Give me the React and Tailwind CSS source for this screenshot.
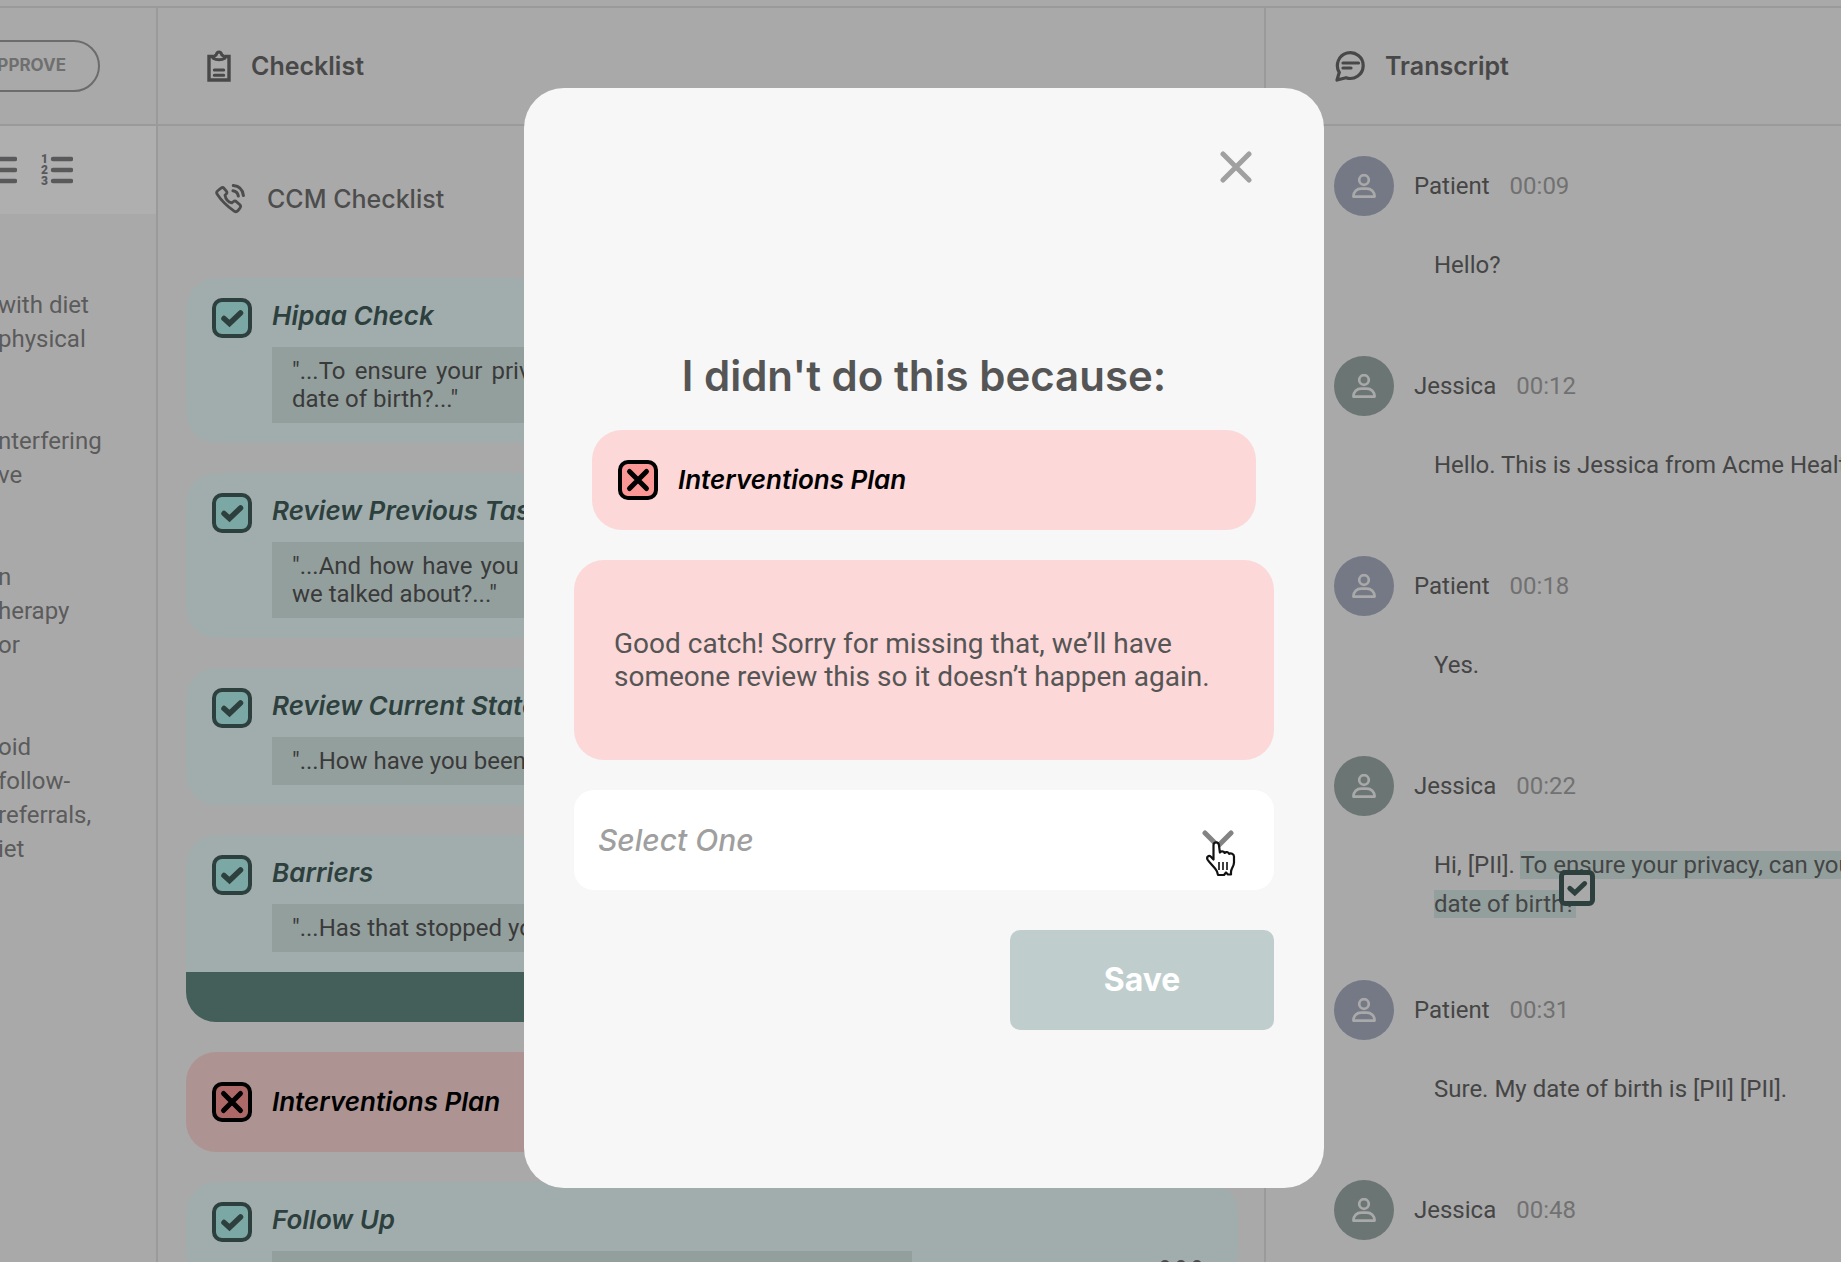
const notes = [
  ["with diet", "physical"],
  ["nterfering", "ve"],
  ["n", "herapy", "or"],
  ["oid", "follow-", "referrals,", "iet"],
];

const checklist = [
  { id: "hipaa", title: "Hipaa Check", quote: '"...To ensure your privacy, can you please confirm your date of birth?..."' },
  { id: "tasks", title: "Review Previous Tasks", quote: '"...And how have you been doing with the exercise plan we talked about?..."' },
  { id: "state", title: "Review Current State", quote: '"...How have you been feeling?..."' },
  { id: "barriers", title: "Barriers", quote: '"...Has that stopped you?..."', bar: true },
  { id: "plan", title: "Interventions Plan", missed: true },
  { id: "follow", title: "Follow Up", quote: "", menu: true },
];

const messages = [
  { who: "Patient", time: "00:09", text: "Hello?" },
  { who: "Jessica", time: "00:12", text: "Hello. This is Jessica from Acme Health" },
  { who: "Patient", time: "00:18", text: "Yes." },
  { who: "Jessica", time: "00:22", text: "Hi, [PII]. ", marked: ["To ensure your privacy, can you", "date of birth?"] },
  { who: "Patient", time: "00:31", text: "Sure. My date of birth is [PII] [PII]." },
  { who: "Jessica", time: "00:48", text: "" },
];

function Tick({ className }) {
  return (
    <svg viewBox="0 0 40 40" className={className} fill="none" stroke="currentColor" strokeWidth="5.500" strokeLinecap="round" strokeLinejoin="miter" aria-hidden="true">
      <path d="M12 20.500l5.500 5L28.500 15" />
    </svg>
  );
}

function Cross({ className }) {
  return (
    <svg viewBox="0 0 40 40" className={className} fill="none" stroke="currentColor" strokeWidth="5" strokeLinecap="round" aria-hidden="true">
      <path d="M11.500 11.500l17 17M28.500 11.500l-17 17" />
    </svg>
  );
}

function CheckBox({ id, missed, bright }) {
  const tone = bright
    ? "border-black bg-[#fb9896]"
    : missed
      ? "border-black bg-[#ac6967]"
      : "border-[#2d403e] bg-[#7ba8a5]";
  return (
    <span className="grid size-10 shrink-0">
      <input id={id} type="checkbox" defaultChecked={!missed} className={"col-start-1 row-start-1 size-10 appearance-none rounded-[10px] border-4 " + tone} />
      {missed ? (
        <Cross className="pointer-events-none col-start-1 row-start-1 size-10 text-black" />
      ) : (
        <Tick className="pointer-events-none col-start-1 row-start-1 size-10 text-[#2d403e]" />
      )}
    </span>
  );
}

function ClipboardIcon() {
  return (
    <svg viewBox="0 0 24 32" className="h-8 w-6" fill="none" stroke="currentColor" strokeWidth="3.400" aria-hidden="true">
      <path d="M6 6.500H2v23.500h20V6.500h-4" />
      <path d="M6.200 8.300c.2-2.300 1.800-2.800 3-3.300.4-1.800 1.300-3 2.800-3s2.400 1.200 2.800 3c1.200.5 2.800 1 3 3.300-1.400 1-3.600 1.500-5.800 1.500s-4.400-.5-5.800-1.500z" strokeWidth="3" strokeLinejoin="round" />
      <path d="M7.300 20h9.400M7.300 25.200h9.400" strokeWidth="3" strokeLinecap="round" />
    </svg>
  );
}

function PhoneIcon() {
  return (
    <svg viewBox="0 0 30 30" className="size-[30px]" fill="none" stroke="currentColor" strokeWidth="2.800" strokeLinecap="round" strokeLinejoin="round" aria-hidden="true">
      <path d="M3 6.500L6 4.200c1-.8 2.200-.8 3 .1l2.400 2.900c.8 1 .6 2-.2 2.800l-1.200 1.200c.6 3.600 3.200 6.800 6.800 7.600l1.700-1.300c.9-.7 2-.7 2.800.1l3.600 3.200c.9.900.9 2 .2 3l-2.300 3c-.9 1-2.200 1.200-3.300.5C12.500 22.500 7 17.500 2.200 10.200 1.300 8.900 1.700 7.500 3 6.500z" />
      <path d="M18.300 1.600C24 2.200 27.800 6 28.400 11.600M18 6.800c3 .4 4.800 2.200 5.300 5.200" strokeWidth="3" />
    </svg>
  );
}

function ChatIcon() {
  return (
    <svg viewBox="0 0 30 32" className="h-8 w-[30px]" fill="none" stroke="currentColor" strokeWidth="3.200" strokeLinecap="round" strokeLinejoin="round" aria-hidden="true">
      <path d="M4.300 22.300A12.900 12.900 0 1 1 11 27.700L2 30z" />
      <path d="M8 13h15.500M8 18h8" />
    </svg>
  );
}

function PersonIcon() {
  return (
    <svg viewBox="0 0 24 24" className="size-6" fill="none" stroke="currentColor" strokeWidth="2.700" strokeLinejoin="round" aria-hidden="true">
      <circle cx="12" cy="6" r="4.800" />
      <path d="M1.400 22.600c0-5.100 3.600-8 7.800-8h5.600c4.200 0 7.800 2.900 7.800 8z" />
    </svg>
  );
}

function ListLines({ numbered }) {
  return (
    <svg viewBox="0 0 32 32" className="size-8" aria-hidden="true">
      <path d="M12 5h18M12 16h18M12 27h18" fill="none" stroke="currentColor" strokeWidth="4.400" strokeLinecap="round" />
      {numbered && (
        <g fill="currentColor" fontFamily="Roboto, sans-serif" fontWeight="900" fontSize="12">
          <text x="0" y="9">1</text>
          <text x="0" y="20">2</text>
          <text x="0" y="31">3</text>
        </g>
      )}
    </svg>
  );
}

function HandCursor() {
  return (
    <svg viewBox="0 0 32 38" className="pointer-events-none absolute top-[50px] right-[37px] h-[38px] w-8" fill="#fff" stroke="#111" strokeWidth="2.200" strokeLinejoin="round" aria-hidden="true">
      <path d="M8.500 19.500V5c0-3.600 5-3.600 5.400 0l1 7.500c.8-1.800 4.200-1.500 4.700.5 1.200-1.500 4-1.100 4.600 1 1.500-1.200 4.800-.3 4.800 2.500v6c0 4-3 6-3 9.500V34.500h-3l-2-2-2 2.500h-6L12 31.500c-2-4-7.500-8.500-9.500-12-1.300-3 1.500-4.600 3.400-2.800z" />
      <path d="M14 22v8M18 22v8M22 22v8" fill="none" strokeWidth="1.600" />
    </svg>
  );
}

function ChecklistCard({ item }) {
  if (item.missed) {
    return (
      <li className="flex h-[100px] items-center gap-5 rounded-[30px] bg-[#ad9492] px-[26px]">
        <CheckBox id={item.id} missed />
        <label htmlFor={item.id} className="text-[26px] leading-8 font-semibold text-black italic">{item.title}</label>
      </li>
    );
  }
  return (
    <li className="overflow-hidden rounded-[30px] bg-[#a1adac]">
      <div className="flex items-center justify-between py-5 pr-9 pl-[26px]">
        <div className="flex gap-5">
          <CheckBox id={item.id} />
          <div>
            <label htmlFor={item.id} className="flex h-[49px] items-start pt-0.5 text-[26px] leading-8 font-semibold text-[#2d403e] italic">{item.title}</label>
            <p className={"w-[640px] bg-[#939f9d] px-5 py-2.5 text-justify font-[Roboto,sans-serif] text-2xl leading-7 text-[#3a3a3a] " + (item.quote ? "" : "h-[76px]")}>{item.quote}</p>
          </div>
        </div>
        {item.menu && (
          <button aria-label="More options" className="flex gap-1.5 text-[#4a4a4a]">
            <span className="size-2.5 rounded-full bg-current" />
            <span className="size-2.5 rounded-full bg-current" />
            <span className="size-2.5 rounded-full bg-current" />
          </button>
        )}
      </div>
      {item.bar && <div className="h-[50px] bg-[#445e5a]" />}
    </li>
  );
}

function Message({ m }) {
  return (
    <li className="min-h-[200px] pb-14">
      <div className="flex items-center gap-5 text-2xl">
        <span className={"flex size-[60px] items-center justify-center rounded-full text-[#a9a9a9] " + (m.who === "Patient" ? "bg-[#757985]" : "bg-[#6a7574]")}>
          <PersonIcon />
        </span>
        <span className="text-[#454545]">{m.who}</span>
        <time className="text-[#717171]">{m.time}</time>
      </div>
      <p className="relative mt-[30px] ml-[100px] text-2xl leading-[39px] whitespace-nowrap text-[#454545]">
        {m.text}
        {m.marked && (
          <>
            <mark className="bg-[#939f9d] text-inherit">{m.marked[0]}</mark>
            <br />
            <mark className="bg-[#939f9d] text-inherit">{m.marked[1]}</mark>
            <span className="absolute top-6 left-[125px] flex size-9 items-center justify-center rounded-md border-[5px] border-[#2d403e] bg-[#a9a9a9] text-[#2d403e]">
              <Tick className="size-9 shrink-0" />
            </span>
          </>
        )}
      </p>
    </li>
  );
}

function ReasonDialog() {
  return (
    <div className="fixed inset-0 flex items-start justify-center pt-[88px] pl-[7px]">
      <div role="dialog" aria-modal="true" aria-labelledby="reason-title" className="flex w-[800px] flex-col rounded-[40px] bg-[#f7f7f7] px-[50px] pb-[158px]">
        <div className="flex justify-end pt-[63px] pr-[22px]">
          <button aria-label="Close" className="text-[#a0a0a0]">
            <svg viewBox="0 0 32 32" className="size-8" fill="none" stroke="currentColor" strokeWidth="5" strokeLinecap="round" aria-hidden="true">
              <path d="M3 3l26 26M29 3L3 29" />
            </svg>
          </button>
        </div>
        <h2 id="reason-title" className="mt-[169px] text-center text-[42px] leading-[48px] font-semibold text-[#555]">I didn't do this because:</h2>
        <div className="mx-[18px] mt-[30px] flex h-[100px] items-center gap-5 rounded-[30px] bg-[#fcd8d8] px-[26px]">
          <CheckBox id="reason-item" missed bright />
          <label htmlFor="reason-item" className="text-[26px] leading-8 font-semibold text-black italic">Interventions Plan</label>
        </div>
        <div className="mt-[30px] flex h-[200px] items-center rounded-[30px] bg-[#fcd8d8] px-10">
          <p className="font-[Roboto,sans-serif] text-[28px] leading-[33px] text-[#555]">Good catch! Sorry for missing that, we’ll have someone review this so it doesn’t happen again.</p>
        </div>
        <div className="relative mt-[30px]">
          <select aria-label="Reason" className="h-[100px] w-full appearance-none rounded-[20px] bg-white px-6 text-[30px] font-medium text-[#9f9f9f] italic">
            <option>Select One</option>
          </select>
          <svg viewBox="0 0 32 20" className="pointer-events-none absolute top-10 right-10 h-5 w-8" fill="none" stroke="#838383" strokeWidth="5" strokeLinecap="round" strokeLinejoin="round" aria-hidden="true">
            <path d="M3 3l13 13L29 3" />
          </svg>
          <HandCursor />
        </div>
        <button className="mt-10 h-[100px] w-[264px] self-end rounded-[10px] bg-[#bfcecd] text-[32px] font-bold text-white">Save</button>
      </div>
    </div>
  );
}

export default function App() {
  return (
    <div className="h-screen overflow-hidden bg-[#a9a9a9] pt-1.5 font-[Inter,sans-serif]">
      <div className="flex h-full border-t-2 border-[#9a9a9a]">
        <section className="flex w-[158px] shrink-0 flex-col overflow-hidden border-r-2 border-[#9a9a9a]">
          <div className="flex h-[118px] shrink-0 items-center justify-end border-b-2 border-[#9a9a9a] pr-14">
            <button className="flex h-[52px] shrink-0 items-center rounded-full border-2 border-[#6c6c6c] px-8 text-[17px] font-bold text-[#6f6f6f]">APPROVE</button>
          </div>
          <div className="flex h-[88px] shrink-0 items-center justify-end gap-6 bg-[#afafaf] pr-[83px] text-[#59595c]">
            <button aria-label="Bulleted list" className="shrink-0"><ListLines /></button>
            <button aria-label="Numbered list" className="shrink-0"><ListLines numbered /></button>
          </div>
          <div className="-ml-0.5 flex flex-col gap-[68px] pt-[74px] font-[Roboto,sans-serif] text-2xl leading-[34px] text-[#5b5b5b]">
            {notes.map((lines) => (
              <p key={lines[0]}>
                {lines.map((line) => (
                  <span key={line} className="block whitespace-nowrap">{line}</span>
                ))}
              </p>
            ))}
          </div>
        </section>

        <section className="w-[1108px] shrink-0 border-r-2 border-[#9a9a9a]">
          <header className="flex h-[118px] items-center gap-5 border-b-2 border-[#9a9a9a] pl-[49px] text-[#484848]">
            <ClipboardIcon />
            <h1 className="text-[25px] leading-8 font-semibold">Checklist</h1>
          </header>
          <div className="flex h-[152px] items-center gap-[22px] pb-1.5 pl-[57px] text-[#4d4d4d]">
            <PhoneIcon />
            <h2 className="text-[25px] leading-8 font-medium">CCM Checklist</h2>
          </div>
          <ul className="flex flex-col gap-[30px] pr-[26px] pl-7">
            {checklist.map((item) => (
              <ChecklistCard key={item.id} item={item} />
            ))}
          </ul>
        </section>

        <section className="min-w-0 flex-1">
          <header className="flex h-[118px] items-center gap-5 border-b-2 border-[#9a9a9a] pl-[69px] text-[#484848]">
            <ChatIcon />
            <h1 className="text-[25px] leading-8 font-semibold">Transcript</h1>
          </header>
          <ul className="overflow-hidden pt-[30px] pl-[68px] font-[Roboto,sans-serif]">
            {messages.map((m) => (
              <Message key={m.time} m={m} />
            ))}
          </ul>
        </section>
      </div>
      <ReasonDialog />
    </div>
  );
}
